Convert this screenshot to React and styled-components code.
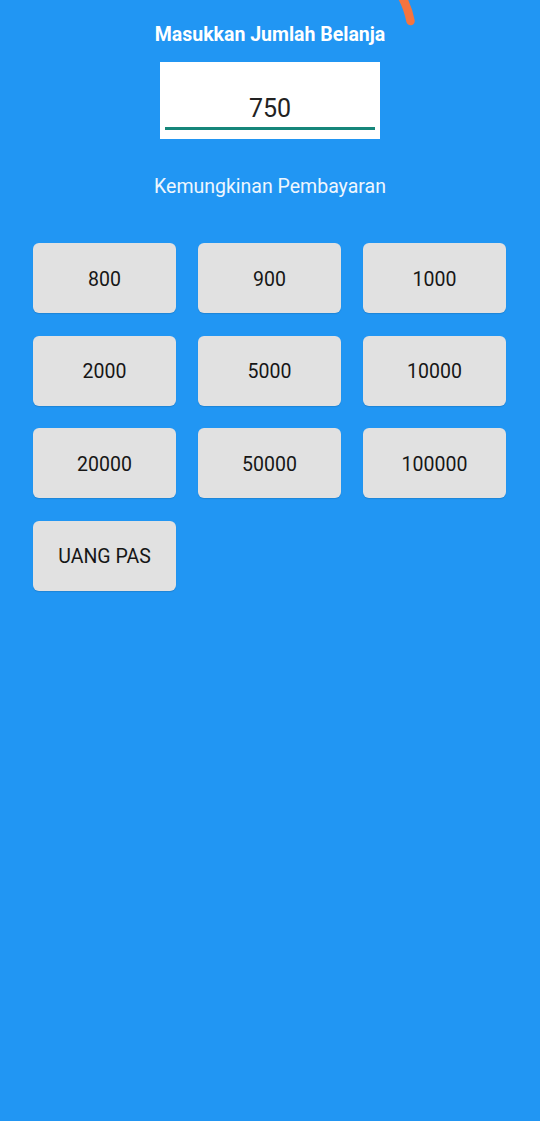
import React from "react";
import styled, { createGlobalStyle } from "styled-components";

const Global = createGlobalStyle`
  html, body { margin: 0; padding: 0; background: #2196f3; }
  body { font-family: Roboto, "Noto Sans", sans-serif; }
`;

const Page = styled.div`
  position: relative;
  width: 540px;
  min-height: 1121px;
  background: #2196f3;
  display: flex;
  flex-direction: column;
  align-items: center;
  overflow: hidden;
`;

const Title = styled.h1`
  margin: 24px 0 0;
  font-size: 19.5px;
  font-weight: 700;
  color: #ffffff;
  line-height: 22px;
`;

const InputBox = styled.div`
  margin-top: 16px;
  width: 220px;
  height: 77px;
  background: #ffffff;
  box-sizing: border-box;
  padding: 0 5px;
  display: flex;
  flex-direction: column;
  justify-content: flex-end;
  padding-bottom: 9px;
`;

const Field = styled.input`
  border: none;
  outline: none;
  background: transparent;
  text-align: center;
  font-family: Roboto, "Noto Sans", sans-serif;
  font-size: 25px;
  color: #222;
  padding: 0 0 4px;
  width: 100%;
  border-bottom: 3px solid #16867a;
  line-height: 28px;
`;

const Subtitle = styled.p`
  margin: 37px 0 0;
  font-size: 19.5px;
  color: #eef6fe;
  line-height: 22px;
`;

const Grid = styled.div`
  margin-top: 45px;
  width: 474px;
  display: grid;
  grid-template-columns: repeat(3, 143px);
  column-gap: 22px;
  row-gap: 22.5px;
`;

const PayButton = styled.button`
  height: 70px;
  border: none;
  border-radius: 6px;
  background: #e1e1e1;
  color: #161616;
  font-family: Roboto, "Noto Sans", sans-serif;
  font-size: 19.5px;
  padding-top: 3px;
  box-shadow: 0 1px 1px rgba(0, 0, 0, 0.12);
  cursor: pointer;
`;

const Stroke = styled.svg`
  position: absolute;
  left: 395px;
  top: 0;
`;

const options = ["800", "900", "1000", "2000", "5000", "10000", "20000", "50000", "100000", "UANG PAS"];

export default function App() {
  return (
    <Page>
      <Global />
      <Stroke width="30" height="30" viewBox="0 0 30 30">
        <path d="M7 -3 Q13 8 15.5 21" stroke="#f5743f" strokeWidth="8.5" strokeLinecap="round" fill="none" />
      </Stroke>
      <Title>Masukkan Jumlah Belanja</Title>
      <InputBox>
        <Field defaultValue="750" />
      </InputBox>
      <Subtitle>Kemungkinan Pembayaran</Subtitle>
      <Grid>
        {options.map((o) => (
          <PayButton key={o}>{o}</PayButton>
        ))}
      </Grid>
    </Page>
  );
}
